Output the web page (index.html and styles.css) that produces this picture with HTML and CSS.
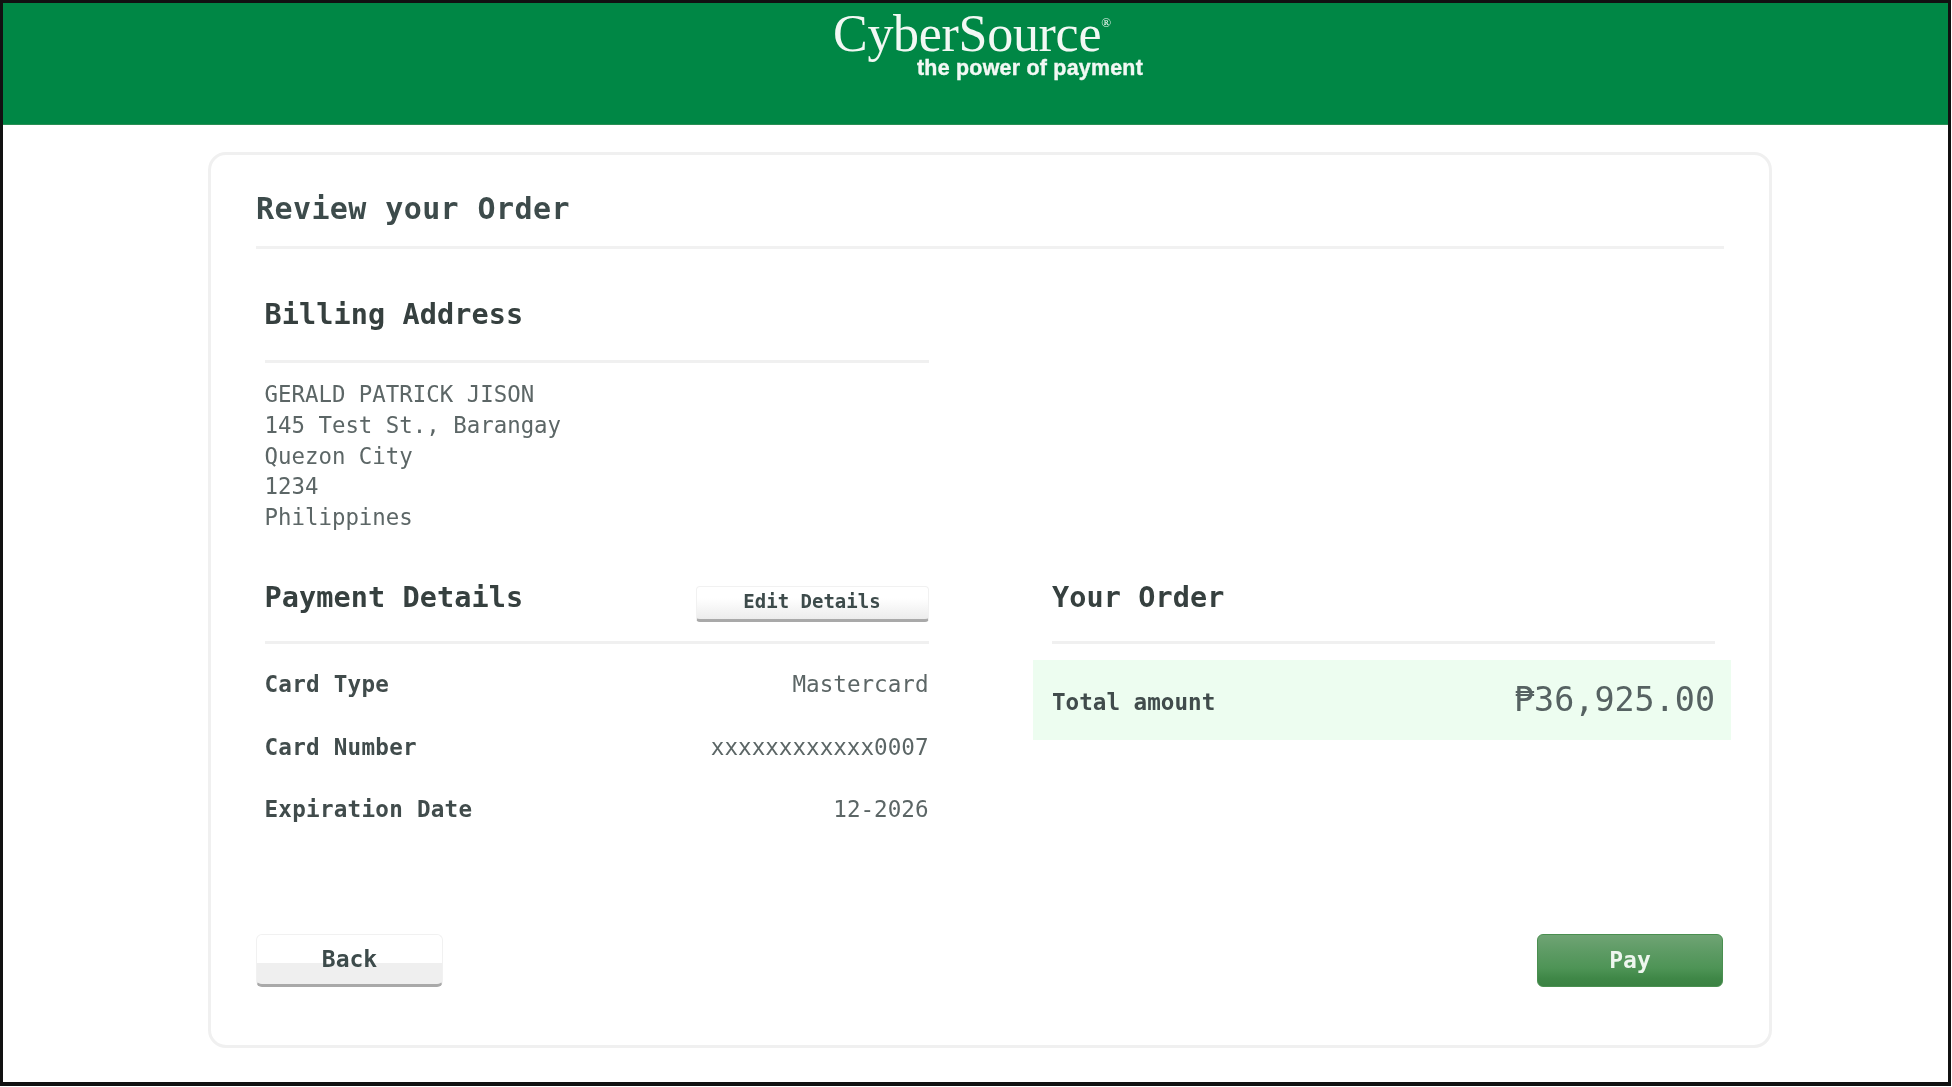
FILE: index.html
```html
<!DOCTYPE html>
<html lang="en">
<head>
<meta charset="utf-8">
<title>Review your Order</title>
<link rel="stylesheet" href="styles.css">
</head>
<body>
<div class="frame">
  <header class="brand-bar">
    <div class="logo">
      <div class="logo-name">CyberSource<sup class="logo-mark">®</sup></div>
      <div class="logo-tag">the power of payment</div>
    </div>
  </header>
  <main class="card">
    <h1 class="card-title">Review your Order</h1>
    <div class="sections">
      <section class="billing">
        <h2 class="section-title billing-title">Billing Address</h2>
        <address class="address">
          <div>GERALD PATRICK JISON</div>
          <div>145 Test St., Barangay</div>
          <div>Quezon City</div>
          <div>1234</div>
          <div>Philippines</div>
        </address>
      </section>
      <section class="payment">
        <div class="section-head">
          <h2 class="section-title">Payment Details</h2>
          <button class="btn btn-edit" type="button">Edit Details</button>
        </div>
        <dl class="details">
          <div class="detail-row"><dt>Card Type</dt><dd>Mastercard</dd></div>
          <div class="detail-row"><dt>Card Number</dt><dd>xxxxxxxxxxxx0007</dd></div>
          <div class="detail-row"><dt>Expiration Date</dt><dd>12-2026</dd></div>
        </dl>
      </section>
      <section class="order">
        <div class="section-head">
          <h2 class="section-title">Your Order</h2>
        </div>
        <div class="total">
          <span class="total-label">Total amount</span>
          <span class="total-value">₱36,925.00</span>
        </div>
      </section>
    </div>
    <div class="actions">
      <button class="btn btn-back" type="button">Back</button>
      <button class="btn btn-pay" type="button">Pay</button>
    </div>
  </main>
</div>
</body>
</html>
```
FILE: styles.css
```css
* { box-sizing: border-box; }
html, body { margin: 0; padding: 0; background: #fff; }
body {
  font-family: "DejaVu Sans Mono", "Liberation Mono", monospace;
  color: #3f4a4a;
  overflow: hidden;
}
.frame {
  width: 1951px;
  height: 1086px;
  border: 3px solid #111;
  border-bottom-width: 4px;
  filter: blur(0.7px);
  overflow: hidden;
}
.brand-bar {
  height: 122px;
  background: #008745;
  border-bottom: 1px solid #2a8f55;
  display: flex;
  padding-left: 830px;
}
.logo { width: 340px; color: #f2f8f4; }
.logo-name {
  font-family: "Liberation Serif", serif;
  font-size: 52px;
  line-height: 46px;
  margin-top: 8px;
  letter-spacing: -0.3px;
  white-space: nowrap;
}
.logo-mark {
  font-size: 13px;
  line-height: 0;
  vertical-align: 24px;
}
.logo-tag {
  font-family: "Liberation Sans", sans-serif;
  font-weight: 700;
  font-size: 21.4px;
  line-height: 20px;
  margin: 1px 0 0 84px;
  letter-spacing: 0.25px;
  white-space: nowrap;
  -webkit-text-stroke: 0.4px #f2f8f4;
}
.card {
  width: 1564px;
  height: 896px;
  margin: 27px 0 0 205px;
  padding: 34px 45px 0;
  border: 3px solid #f0f0f0;
  border-radius: 18px;
  background: #fff;
}
.card-title {
  margin: 0;
  padding-bottom: 17px;
  font-size: 30px;
  line-height: 40px;
  font-weight: 700;
  letter-spacing: 0.4px;
  color: #3d4b4b;
  border-bottom: 3px solid #f1f1f1;
}
.sections {
  display: grid;
  grid-template-columns: 664px 663px;
  column-gap: 123.5px;
  padding-left: 8.5px;
}
.billing { grid-column: 1 / 3; padding-top: 47px; }
.section-title {
  margin: 0;
  padding-top: 1px;
  font-size: 28.5px;
  line-height: 36px;
  font-weight: 700;
  color: #36403f;
  letter-spacing: 0.1px;
}
.billing-title {
  width: 664px;
  padding-bottom: 28px;
  height: 67px;
  border-bottom: 3px solid #f0f0f0;
}
.address {
  margin-top: 16px;
  font-style: normal;
  font-size: 22.4px;
  line-height: 30.8px;
  color: #5c6666;
}
.payment { margin-top: 46px; }
.order { margin-top: 46px; }
.section-head {
  display: flex;
  justify-content: space-between;
  align-items: flex-start;
  height: 65px;
  border-bottom: 3px solid #f0f0f0;
}
.details { margin: 9px 0 0; }
.detail-row {
  display: flex;
  justify-content: space-between;
  align-items: center;
  height: 62.5px;
}
.detail-row dt {
  font-size: 22.6px;
  font-weight: 700;
  letter-spacing: 0.25px;
  color: #414c4c;
}
.detail-row dd {
  margin: 0;
  font-size: 22.6px;
  color: #5c6666;
}
.total {
  display: flex;
  justify-content: space-between;
  align-items: center;
  height: 80px;
  margin: 16px -16px 0 -19px;
  padding: 0 16px 0 19px;
  background: #edfdf0;
}
.total-label {
  font-size: 22.6px;
  font-weight: 700;
  color: #414c4c;
  padding-top: 4px;
}
.total-value {
  font-size: 33.4px;
  color: #566262;
}
.btn {
  font-family: inherit;
  font-weight: 700;
  padding: 0;
  cursor: pointer;
}
.btn-edit, .btn-back {
  border: 1px solid #f1f1f1;
  border-bottom: 3px solid #a9a9a9;
  color: #3d4b4b;
}
.btn-edit {
  width: 233px;
  height: 36px;
  margin-top: 7px;
  padding-bottom: 3px;
  font-size: 19px;
  line-height: 26px;
  border-radius: 4px;
  background: linear-gradient(#fff 0 35%, #ececec 100%);
}
.actions {
  display: flex;
  justify-content: space-between;
  margin-top: 94px;
  padding-right: 1px;
}
.btn-back {
  width: 187px;
  height: 53px;
  padding-bottom: 2px;
  font-size: 23px;
  border-radius: 6px;
  background: linear-gradient(#fff 0 58%, #efefef 58% 100%);
}
.btn-pay {
  width: 186px;
  height: 53px;
  padding-bottom: 2px;
  font-size: 23px;
  color: #eef6ef;
  border: 1px solid #4a8f50;
  border-radius: 6px;
  background: linear-gradient(#6fa474 0, #5c9a63 35%, #4e9456 65%, #3f8747 85%, #3b8243 100%);
}
```
